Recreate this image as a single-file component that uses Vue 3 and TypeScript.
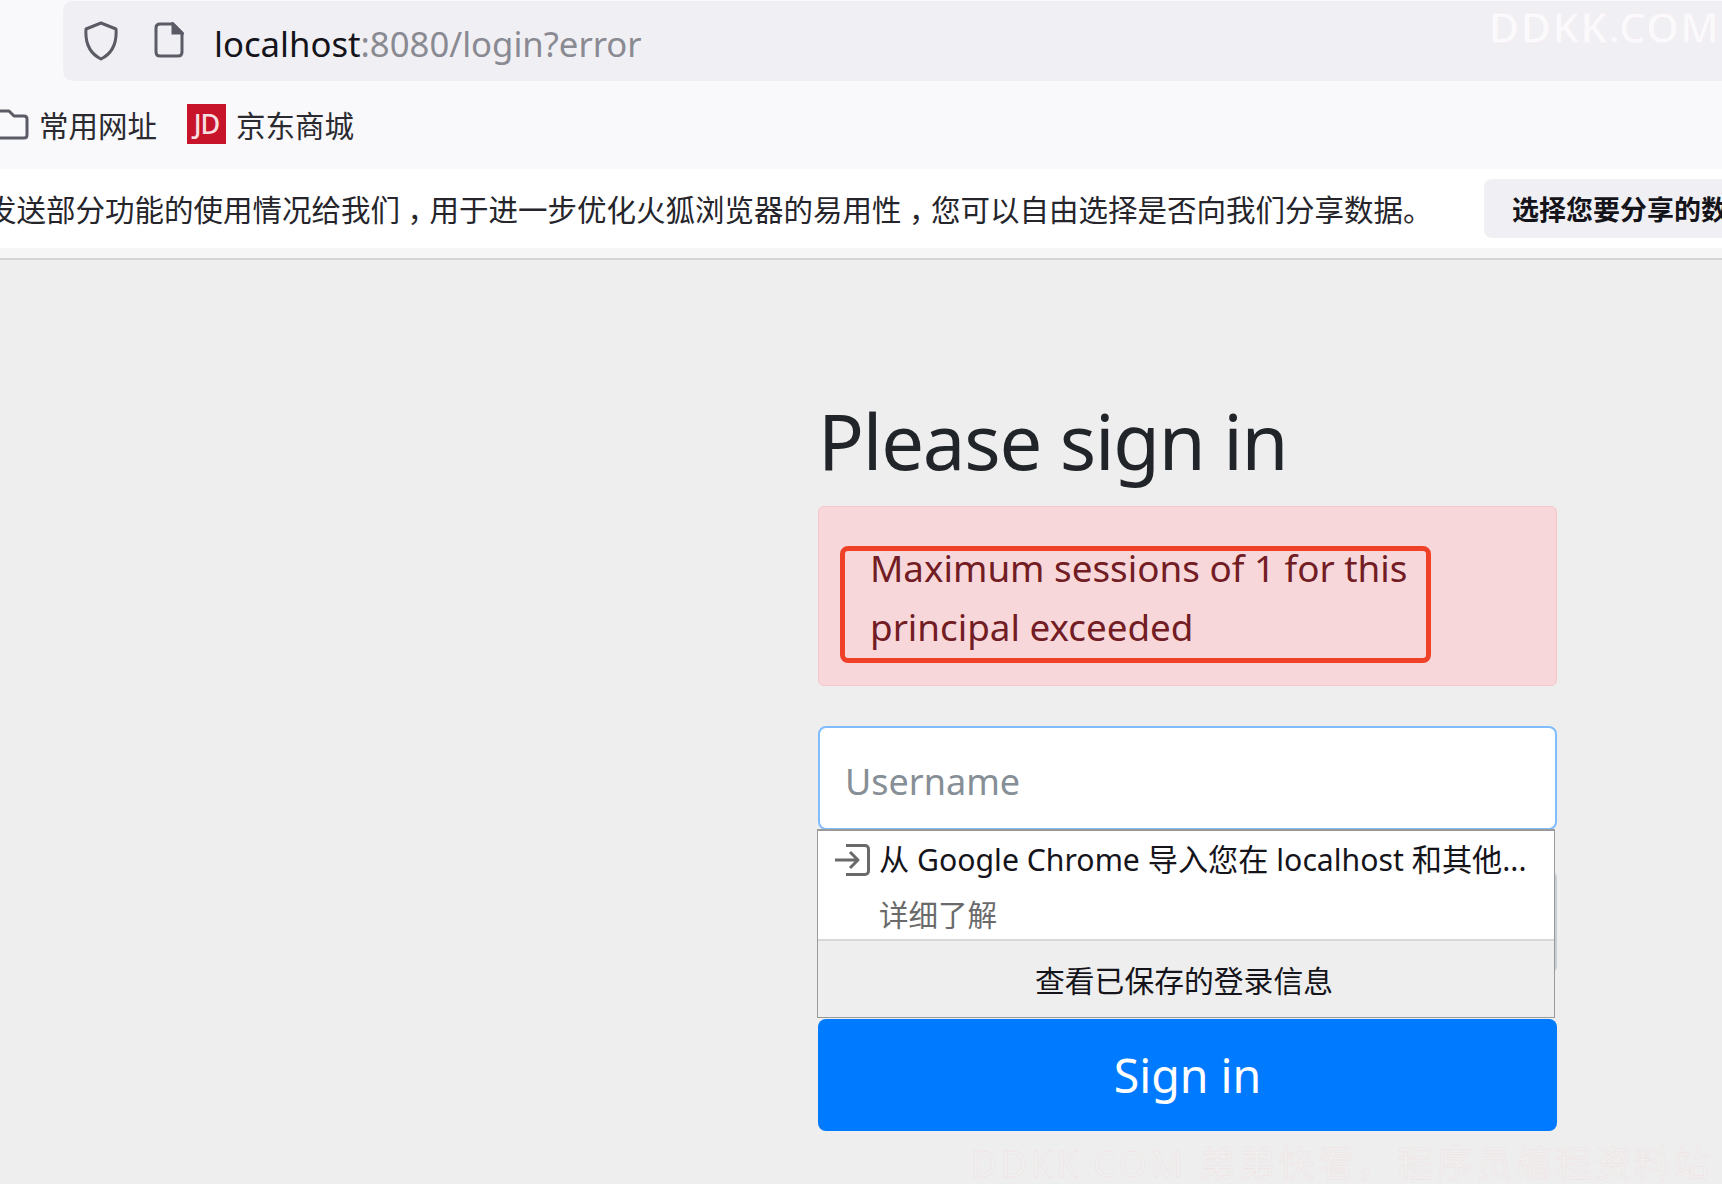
<script setup lang="ts">
const infoParts: string[] = ['发送部分功能的使用情况给我们', '用于进一步优化火狐浏览器的易用性', '您可以自由选择是否向我们分享数据。']
</script>

<template>
  <div class="page">
    <header class="chrome">
      <div class="toolbar">
        <div class="urlbar">
          <svg class="shield" viewBox="0 0 36 40" width="36" height="40" fill="none" stroke="#5b5b66" stroke-width="3">
            <path d="M18 2 L33 8 C34 22 30 32 18 38 C6 32 2 22 3 8 Z" stroke-linejoin="round" />
          </svg>
          <svg class="file" viewBox="0 0 30 36" width="30" height="36" fill="none" stroke="#5b5b66" stroke-width="3">
            <path d="M6 2 H19 L28 11 V30 C28 32.500 26.500 34 24 34 H6 C3.500 34 2 32.500 2 30 V6 C2 3.500 3.500 2 6 2 Z" stroke-linejoin="round" />
            <path d="M19 2 L28 11 H19 Z" fill="#5b5b66" />
          </svg>
          <span class="url"><span class="host">localhost</span>:8080/login?error</span>
        </div>
      </div>
      <nav class="bookmarks">
        <svg class="folder" viewBox="0 0 32 32" width="32" height="32" fill="none" stroke="#5b5b66" stroke-width="3">
          <path d="M-4 3 H12 L17 8 H27 C29 8 30 9 30 11 V27 C30 29 29 30 27 30 H-4" stroke-linejoin="round" />
        </svg>
        <span class="mark">常用网址</span>
        <span class="jd">JD</span>
        <span class="mark">京东商城</span>
      </nav>
      <div class="notice">
        <span class="notice-text">
          <template v-for="(part, i) in infoParts" :key="i">{{ part }}<span v-if="i < infoParts.length - 1" class="comma">，</span></template>
        </span>
        <button class="notice-btn" type="button">选择您要分享的数据</button>
      </div>
      <div class="notice-shadow"></div>
    </header>

    <main class="content">
      <form class="signin" @submit.prevent>
        <h2 class="title">Please sign in</h2>
        <div class="alert">
          Maximum sessions of 1 for this<br />principal exceeded
          <span class="annotation"></span>
        </div>
        <input class="field username" type="text" placeholder="Username" />
        <div class="field password"></div>
        <button class="submit" type="submit">Sign in</button>

        <div class="popup">
          <div class="popup-body">
            <div class="popup-line">
              <svg class="import" viewBox="0 0 36 32" width="36" height="32" fill="none" stroke="#6a6a6a" stroke-width="3">
                <path d="M12 1.500 H31 C33 1.500 34.500 3 34.500 5 V27 C34.500 29 33 30.500 31 30.500 H12" stroke-linejoin="round" />
                <path d="M1 16 H24 M16 8 L24 16 L16 24" stroke-linejoin="round" />
              </svg>
              <span>从 Google Chrome 导入您在 localhost 和其他...</span>
            </div>
            <div class="popup-more">详细了解</div>
          </div>
          <div class="popup-action">查看已保存的登录信息</div>
        </div>
      </form>
    </main>

    <div class="mark-top">DDKK.COM</div>
    <div class="mark-bottom">DDKK.COM 弟弟快看，程序员编程资料站</div>
  </div>
</template>

<style>
html,
body {
  margin: 0;
  background: #eeeeee;
}
</style>

<style scoped>
.page {
  position: relative;
  width: 1722px;
  height: 1184px;
  overflow: hidden;
  background: #eeeeee;
  font-family: "Noto Sans", "Noto Sans CJK SC", sans-serif;
}
.chrome {
  background: #f9f9fb;
}
.toolbar {
  height: 81px;
  padding: 1px 0 0 63px;
  box-sizing: border-box;
}
.urlbar {
  height: 80px;
  background: #f0f0f4;
  border-radius: 10px 0 0 10px;
  display: flex;
  align-items: center;
  padding-left: 20px;
}
.shield {
  flex: none;
  margin-top: -1px;
}
.file {
  flex: none;
  margin-left: 35px;
  margin-top: -2px;
}
.url {
  margin-left: 30px;
  font-size: 34.700px;
  color: #8a8a92;
  margin-top: 4px;
}
.host {
  color: #15141a;
}
.bookmarks {
  height: 88px;
  display: flex;
  align-items: center;
  box-sizing: border-box;
  padding-bottom: 2px;
  margin-left: -3px;
}
.folder {
  flex: none;
}
.mark {
  font-size: 29.500px;
  color: #2a2a30;
  margin-left: 10px;
}
.jd {
  flex: none;
  width: 39px;
  height: 40px;
  margin-left: 30px;
  background: #c8142a;
  color: #f6dfe0;
  font-size: 27px;
  font-weight: 500;
  letter-spacing: -1px;
  line-height: 40px;
  text-align: center;
}
.jd + .mark {
  margin-left: 10px;
}
.notice {
  height: 79px;
  background: #ffffff;
  display: flex;
  align-items: center;
  white-space: nowrap;
}
.notice-text {
  flex: none;
  width: 1497px;
  margin-left: -13px;
  font-size: 29.500px;
  color: #25252b;
}
.comma {
  font-feature-settings: "halt";
  padding: 0 0.25em;
}
.notice-btn {
  flex: none;
  height: 59px;
  width: 300px;
  border: none;
  border-radius: 8px 0 0 8px;
  background: #f0f0f4;
  font-family: inherit;
  font-size: 27px;
  font-weight: 700;
  color: #15141a;
  text-align: left;
  padding: 0 0 0 28px;
  white-space: nowrap;
  overflow: hidden;
}
.notice-shadow {
  height: 10px;
  background: #f6f6f7;
  border-bottom: 2px solid #d4d4d4;
}
.content {
  padding-left: 818px;
}
.signin {
  position: relative;
  width: 739px;
}
.title {
  margin: 0;
  padding-top: 118px;
  height: 128px;
  font-size: 76px;
  font-weight: 400;
  line-height: 125px;
  color: #212529;
  letter-spacing: -1.2px;
}
.alert {
  position: relative;
  box-sizing: border-box;
  height: 180px;
  margin-bottom: 40px;
  padding: 32px 0 0 51px;
  background: #f8d7da;
  border: 1px solid #f5c6cb;
  border-radius: 6px;
  color: #721c24;
  font-size: 36.800px;
  line-height: 59px;
}
.annotation {
  position: absolute;
  left: 21px;
  top: 39px;
  width: 591px;
  height: 117px;
  box-sizing: border-box;
  border: 5px solid #ee4128;
  border-radius: 8px;
}
.field {
  display: block;
  width: 100%;
  box-sizing: border-box;
  background: #ffffff;
  font-family: inherit;
}
.username {
  height: 104px;
  border: 2px solid #80bdff;
  border-radius: 8px;
  padding: 6px 25px 0;
  font-size: 36px;
  outline: none;
}
.username::placeholder {
  color: #868e96;
  opacity: 1;
}
.password {
  height: 104px;
  margin-top: 40px;
  border: 2px solid #c9ced3;
  border-radius: 8px;
}
.submit {
  display: block;
  width: 100%;
  height: 112px;
  margin-top: 45px;
  border: none;
  border-radius: 8px;
  background: #007bff;
  color: #ffffff;
  font-family: inherit;
  font-size: 46.500px;
  padding: 0;
}
.popup {
  position: absolute;
  left: -1px;
  top: 569px;
  width: 738px;
  height: 189px;
  box-sizing: border-box;
  border: 1px solid #9a9a9a;
  border-top-width: 2px;
  display: flex;
  flex-direction: column;
  background: #ffffff;
  color: #15141a;
}
.popup-body {
  height: 108px;
  box-sizing: border-box;
  padding: 5px 0 0 16px;
}
.popup-line {
  display: flex;
  align-items: center;
  gap: 9px;
  font-size: 30.200px;
  white-space: nowrap;
}
.import {
  flex: none;
  margin-top: 4px;
}
.popup-more {
  margin: 14px 0 0 45px;
  font-size: 29.500px;
  line-height: 42px;
  color: #6a6a6a;
}
.popup-action {
  flex: 1;
  background: #eeeeee;
  border-top: 2px solid #d8d8d8;
  display: flex;
  align-items: center;
  justify-content: center;
  padding-right: 4px;
  font-size: 29.800px;
  color: #15141a;
}
.mark-top {
  position: absolute;
  right: 2px;
  top: 2px;
  font-size: 42px;
  font-weight: 600;
  color: #fafafc;
  letter-spacing: 1px;
  line-height: 50px;
  -webkit-text-stroke: 0.4px #f6e6ea;
}
.mark-bottom {
  position: absolute;
  right: 9px;
  top: 1141px;
  font-size: 36px;
  line-height: 46px;
  letter-spacing: 3.500px;
  white-space: nowrap;
  color: #efefef;
  -webkit-text-stroke: 0.3px #f3dcdc;
}
</style>
